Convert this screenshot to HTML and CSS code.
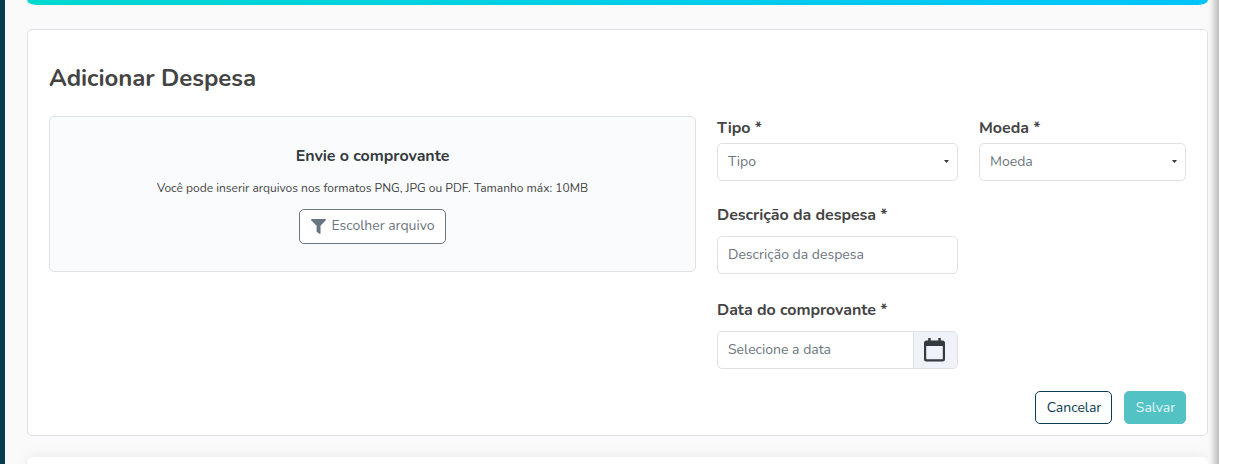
FILE: index.html
```html
<!DOCTYPE html>
<html lang="pt-BR">
<head>
<meta charset="utf-8">
<title>Adicionar Despesa</title>
<link rel="stylesheet" href="styles.css">
</head>
<body>
<div class="app">
  <div class="sidebar"></div>
  <main class="main">
    <div class="banner"></div>
    <section class="card">
      <h1 class="title">Adicionar Despesa</h1>
      <div class="columns">
        <div class="upload">
          <h2 class="upload-title">Envie o comprovante</h2>
          <p class="upload-hint">Você pode inserir arquivos nos formatos PNG, JPG ou PDF. Tamanho máx: 10MB</p>
          <button class="btn btn-file">
            <svg class="icon-filter" viewBox="0 0 15 15"><path d="M.7 0h13.6c.6 0 .9.7.5 1.200L9.500 6.800v7.500c0 .6-.6.9-1.100.5L6 13c-.3-.2-.4-.4-.4-.7V6.800L.2 1.200C-.2.7.1 0 .7 0z"/></svg>
            <span class="file-text">Escolher arquivo</span>
          </button>
        </div>
        <div class="fields">
          <div class="field">
            <label class="label">Tipo *</label>
            <div class="control"><span>Tipo</span><i class="caret"></i></div>
          </div>
          <div class="field">
            <label class="label">Moeda *</label>
            <div class="control"><span>Moeda</span><i class="caret"></i></div>
          </div>
          <div class="field field-desc">
            <label class="label">Descrição da despesa *</label>
            <div class="control"><span>Descrição da despesa</span></div>
          </div>
          <div class="field field-date">
            <label class="label">Data do comprovante *</label>
            <div class="control control-date">
              <span class="placeholder">Selecione a data</span>
              <div class="addon">
                <svg class="icon-calendar" viewBox="0 0 21 24"><path fill-rule="evenodd" d="M4.200 0h2.500v2.500h7.600V0h2.500v2.500h1.900C20 2.500 21 3.500 21 4.800v16.400c0 1.300-1 2.300-2.300 2.300H2.300C1 23.500 0 22.500 0 21.200V4.800c0-1.300 1-2.300 2.300-2.300h1.900zM2.200 8v12.700c0 .4.2.6.6.6h15.400c.4 0 .6-.2.6-.6V8z"/></svg>
              </div>
            </div>
          </div>
        </div>
      </div>
      <div class="actions">
        <button class="btn btn-cancel">Cancelar</button>
        <button class="btn btn-save">Salvar</button>
      </div>
    </section>
    <section class="next-card"></section>
  </main>
  <div class="edge"></div>
</div>
</body>
</html>
```
FILE: styles.css
```css
* { box-sizing: border-box; }
body {
  margin: 0;
  background: #fff;
  color: #444;
  font-family: Nunito, Lato, "Open Sans", sans-serif;
  font-size: 14px;
}
.app { display: flex; height: 464px; overflow: hidden; }
.sidebar { width: 5px; background: #083d50; }
.main { width: 1203px; padding-left: 22px; background: #fafafa; }
.edge {
  width: 11px;
  background: linear-gradient(90deg, #fafafa 0%, #efefef 30%, #d5d5d5 65%, #bcbcbc 100%);
}
.banner {
  height: 5px;
  border-radius: 0 0 10px 10px / 0 0 5px 5px;
  background: linear-gradient(90deg, #00d8d0, #00c4ff);
}
.card {
  height: 407px;
  margin-top: 24px;
  padding: 0 21px;
  border: 1px solid #dee2e6;
  border-radius: 5px;
  background: #fff;
}
.title {
  margin: 0;
  padding-top: 32px;
  height: 86px;
  font-size: 24px;
  line-height: 32px;
  font-weight: 700;
  letter-spacing: -.05px;
}
.columns { display: grid; grid-template-columns: 647px 469px; column-gap: 21px; height: 275px; }
.upload {
  display: flex;
  flex-direction: column;
  align-items: center;
  height: 156px;
  padding-top: 28px;
  border: 1px solid #dee2e6;
  border-radius: 5px;
  background: #fafbfd;
}
.upload-title { margin: 0; font-size: 16px; line-height: 22px; color: #343a40; letter-spacing: -.04px; }
.upload-hint { margin: 12px 0 11px; font-size: 12px; line-height: 19px; white-space: nowrap; }
.btn {
  display: flex;
  align-items: center;
  justify-content: center;
  height: 33px;
  padding: 0 0 0 1px;
  border: 1px solid;
  border-radius: 5px;
  background: #fff;
  font: inherit;
  font-size: 14px;
  letter-spacing: -.04px;
  white-space: nowrap;
}
.btn-file { width: 147px; height: 35px; gap: 6px; padding: 0; border-color: #6c757d; color: #6c757d; }
.file-text { padding-bottom: 2px; }
.icon-filter { width: 15px; height: 15px; fill: #697582; }
.fields { display: grid; grid-template-columns: 241px 207px; column-gap: 21px; align-content: start; }
.label { display: block; height: 27px; font-size: 16px; line-height: 25px; font-weight: 700; letter-spacing: -.05px; white-space: nowrap; }
.control {
  display: flex;
  align-items: center;
  justify-content: space-between;
  height: 38px;
  padding: 0 8px 2px 10px;
  border: 1px solid #dee2e6;
  border-radius: 5px;
  background: #fff;
  color: #6c757d;
}
.caret { width: 5px; height: 3px; margin-top: 1px; background: #343a40; clip-path: polygon(0 0, 100% 0, 50% 100%); }
.field-desc, .field-date { grid-column: 1; }
.field-desc { padding-top: 22px; }
.field-date { padding-top: 24px; }
.field-desc .label, .field-date .label { height: 33px; }
.control-date { padding: 0 0 0 10px; }
.placeholder { padding-bottom: 2px; }
.addon {
  display: flex;
  align-items: center;
  justify-content: center;
  width: 44px;
  height: 36px;
  padding-right: 2px;
  border-left: 1px solid #dee2e6;
  border-radius: 0 4px 4px 0;
  background: #eff3f9;
}
.icon-calendar { width: 21px; height: 24px; fill: #343a40; }
.actions { display: flex; justify-content: flex-end; gap: 12px; }
.btn-cancel { width: 77px; border-color: #083d50; color: #083d50; }
.btn-save { width: 62px; border-color: #53c2c5; background: #53c2c5; color: #e4f6f7; }
.next-card {
  height: 40px;
  margin-top: 21px;
  border-radius: 6px;
  background: #fff;
  box-shadow: 0 0 14px rgba(0, 0, 0, .08);
}
```
